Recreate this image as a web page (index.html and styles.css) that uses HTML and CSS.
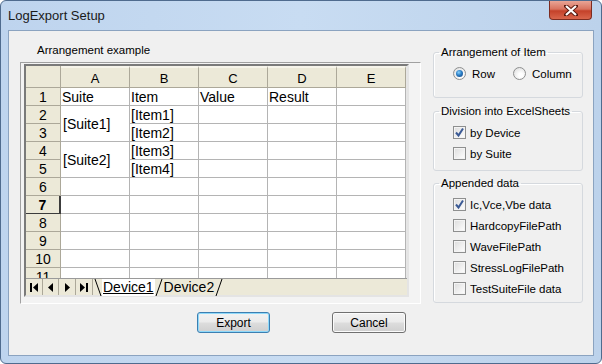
FILE: index.html
```html
<!DOCTYPE html>
<html lang="en">
<head>
    <meta charset="UTF-8">
    <title>LogExport Setup</title>
    <link rel="stylesheet" href="styles.css">
</head>
<body>
    <div class="window">
        <div class="titlebar">
            <span class="title">LogExport Setup</span>
            <div class="close-btn">
                <svg width="14" height="11" viewBox="0 0 14 11">
                    <path d="M2 1 L12 10 M12 1 L2 10" stroke="#5a1a10" stroke-width="4" stroke-linecap="square"/>
                    <path d="M2 1 L12 10 M12 1 L2 10" stroke="#ffffff" stroke-width="2.2"/>
                </svg>
            </div>
        </div>

        <div class="client">
            <div class="main">
                <div class="example">
                    <div class="caption">Arrangement example</div>
                    <div class="sheet-frame">
                        <div class="sheet">
                            <div class="grid">
                                <div class="hd corner"></div>
                                <div class="hd col">A</div>
                                <div class="hd col">B</div>
                                <div class="hd col">C</div>
                                <div class="hd col">D</div>
                                <div class="hd col">E</div>

                                <div class="hd row">1</div>
                                <div class="cell">Suite</div>
                                <div class="cell">Item</div>
                                <div class="cell">Value</div>
                                <div class="cell">Result</div>
                                <div class="cell"></div>

                                <div class="hd row">2</div>
                                <div class="cell merged">[Suite1]</div>
                                <div class="cell">[Item1]</div>
                                <div class="cell"></div>
                                <div class="cell"></div>
                                <div class="cell"></div>

                                <div class="hd row">3</div>
                                <div class="cell">[Item2]</div>
                                <div class="cell"></div>
                                <div class="cell"></div>
                                <div class="cell"></div>

                                <div class="hd row">4</div>
                                <div class="cell merged">[Suite2]</div>
                                <div class="cell">[Item3]</div>
                                <div class="cell"></div>
                                <div class="cell"></div>
                                <div class="cell"></div>

                                <div class="hd row">5</div>
                                <div class="cell">[Item4]</div>
                                <div class="cell"></div>
                                <div class="cell"></div>
                                <div class="cell"></div>

                                <div class="hd row">6</div>
                                <div class="cell"></div><div class="cell"></div><div class="cell"></div><div class="cell"></div><div class="cell"></div>
                                <div class="hd row active">7</div>
                                <div class="cell"></div><div class="cell"></div><div class="cell"></div><div class="cell"></div><div class="cell"></div>
                                <div class="hd row">8</div>
                                <div class="cell"></div><div class="cell"></div><div class="cell"></div><div class="cell"></div><div class="cell"></div>
                                <div class="hd row">9</div>
                                <div class="cell"></div><div class="cell"></div><div class="cell"></div><div class="cell"></div><div class="cell"></div>
                                <div class="hd row">10</div>
                                <div class="cell"></div><div class="cell"></div><div class="cell"></div><div class="cell"></div><div class="cell"></div>
                                <div class="hd row">11</div>
                                <div class="cell"></div><div class="cell"></div><div class="cell"></div><div class="cell"></div><div class="cell"></div>
                            </div>

                            <div class="tabbar">
                                <div class="nav">
                                    <svg width="16" height="17" viewBox="0 0 16 17"><rect x="4" y="4" width="2" height="9"/><path d="M12 4 L7 8.5 L12 13 Z"/></svg>
                                </div>
                                <div class="nav">
                                    <svg width="15" height="17" viewBox="0 0 15 17"><path d="M10 4 L5 8.5 L10 13 Z"/></svg>
                                </div>
                                <div class="nav">
                                    <svg width="16" height="17" viewBox="0 0 16 17"><path d="M6 4 L11 8.5 L6 13 Z"/></svg>
                                </div>
                                <div class="nav">
                                    <svg width="16" height="17" viewBox="0 0 16 17"><path d="M4 4 L9 8.5 L4 13 Z"/><rect x="10" y="4" width="2" height="9"/></svg>
                                </div>
                                <div class="tabs">
                                    <svg class="slant" width="8" height="17" viewBox="0 0 8 17"><path d="M1 0 L7 17" stroke="#000" fill="none"/></svg>
                                    <span class="tab current">Device1</span>
                                    <svg class="slant" width="8" height="17" viewBox="0 0 8 17"><path d="M7 0 L1 17" stroke="#000" fill="none"/></svg>
                                    <span class="tab">Device2</span>
                                    <svg class="slant" width="8" height="17" viewBox="0 0 8 17"><path d="M7 0 L1 17" stroke="#000" fill="none"/></svg>
                                </div>
                            </div>
                        </div>
                    </div>
                </div>

                <div class="options">
                    <fieldset class="group group-arrange">
                        <legend>Arrangement of Item</legend>
                        <div class="group-body radios">
                            <label class="opt first"><span class="radio on"></span>Row</label>
                            <label class="opt"><span class="radio"></span>Column</label>
                        </div>
                    </fieldset>

                    <fieldset class="group group-division">
                        <legend>Division into ExcelSheets</legend>
                        <div class="group-body">
                            <label class="opt"><span class="check on"><svg width="11" height="11" viewBox="0 0 11 11"><path d="M2 5.5 L4.5 8.5 L9 1.5" stroke="#3b5a95" stroke-width="2" fill="none"/></svg></span>by Device</label>
                            <label class="opt"><span class="check"></span>by Suite</label>
                        </div>
                    </fieldset>

                    <fieldset class="group group-append">
                        <legend>Appended data</legend>
                        <div class="group-body">
                            <label class="opt"><span class="check on"><svg width="11" height="11" viewBox="0 0 11 11"><path d="M2 5.5 L4.5 8.5 L9 1.5" stroke="#3b5a95" stroke-width="2" fill="none"/></svg></span>Ic,Vce,Vbe data</label>
                            <label class="opt"><span class="check"></span>HardcopyFilePath</label>
                            <label class="opt"><span class="check"></span>WaveFilePath</label>
                            <label class="opt"><span class="check"></span>StressLogFilePath</label>
                            <label class="opt"><span class="check"></span>TestSuiteFile data</label>
                        </div>
                    </fieldset>
                </div>
            </div>

            <div class="buttons">
                <button class="btn default">Export</button>
                <button class="btn">Cancel</button>
            </div>
        </div>
    </div>
</body>
</html>
```

FILE: styles.css
```css
* {
    margin: 0;
    padding: 0;
    box-sizing: border-box;
}

body {
    width: 602px;
    height: 364px;
    font-family: 'Liberation Sans', Arial, sans-serif;
    font-size: 12px;
    color: #000;
    background: #ffffff;
}

.window {
    width: 602px;
    height: 364px;
    border: 1px solid #4f6b8e;
    border-radius: 6px;
    background: linear-gradient(to right, #bed4ee, #c8dcf2 50%, #bcd2eb);
    display: flex;
    flex-direction: column;
}

.titlebar {
    height: 29px;
    display: flex;
    align-items: flex-start;
    justify-content: space-between;
    padding-left: 7px;
}

.title {
    font-size: 13px;
    line-height: 29px;
    color: #1a1a1a;
}

.close-btn {
    width: 43px;
    height: 19px;
    margin-right: 9px;
    border: 1px solid #7d2c20;
    border-top: none;
    border-radius: 0 0 4px 4px;
    background: linear-gradient(#e9a596 0%, #d8735f 45%, #c4412a 55%, #d9664c 100%);
    display: flex;
    align-items: center;
    justify-content: center;
}

.client {
    flex: 1;
    margin: 0 7px 7px;
    background: #f0f0f0;
    border: 1px solid #8ba3c0;
    display: flex;
    flex-direction: column;
}

.main {
    display: flex;
}

/* left: sample sheet */
.example {
    width: 401px;
    margin-left: 11px;
    padding-top: 12px;
}

.caption {
    font-size: 11.5px;
    line-height: 14px;
    padding-left: 17px;
    margin-bottom: 5px;
}

.sheet-frame {
    height: 242px;
    border: 1px solid;
    border-color: #a0a0a0 #ffffff #ffffff #a0a0a0;
    padding: 1px 0 0 3px;
    background: #f3f3f3;
}

.sheet {
    width: 385px;
    height: 233px;
    border: 2px solid;
    border-color: #7a7a7a #e4e4e4 #e4e4e4 #7a7a7a;
    background: #e6e6e6;
}

.grid {
    width: 380px;
    height: 212px;
    overflow: hidden;
    display: grid;
    grid-template-columns: 35px repeat(5, 69px);
    grid-template-rows: 22px repeat(11, 18px);
    background: #fff;
    font-size: 14px;
}

.cell {
    border-right: 1px solid #b4b4b4;
    border-bottom: 1px solid #b4b4b4;
    padding-left: 1px;
    line-height: 18px;
    white-space: nowrap;
    overflow: hidden;
}

.cell.merged {
    grid-row: span 2;
    display: flex;
    align-items: center;
    padding-left: 2px;
}

.hd {
    background: #ece9d8;
    border-right: 1px solid #aca899;
    border-bottom: 1px solid #aca899;
    text-align: center;
}

.hd.col {
    font-size: 13px;
    line-height: 22px;
    border-top: 2px solid #f6f4ea;
}

.hd.row {
    line-height: 18px;
}

.hd.row.active {
    font-weight: bold;
    border-right: 2px solid #3c3c3c;
    border-bottom: 1px solid #3c3c3c;
}

.tabbar {
    width: 381px;
    height: 17px;
    background: #ece9d8;
    border-top: 1px solid #9a9a9a;
    display: flex;
    align-items: center;
}

.nav {
    height: 16px;
    border-right: 1px solid #aca899;
    display: flex;
    align-items: center;
}

.nav svg {
    fill: #000;
}

.tabs {
    display: flex;
    align-items: center;
    height: 17px;
    margin-left: 1px;
}

.slant {
    display: block;
}

.tab {
    font-size: 14px;
    line-height: 16px;
    padding: 0 1px;
    height: 17px;
}

.tab.current {
    background: #ffffff;
    text-decoration: underline;
}

/* right: options */
.options {
    width: 150px;
    margin-left: 12px;
    padding-top: 14px;
    display: flex;
    flex-direction: column;
    gap: 6px;
    font-size: 11.5px;
}

.group {
    border: 1px solid #d5d9de;
    border-radius: 3px;
    padding: 0;
    margin: 0;
    min-width: 0;
    box-shadow: inset 1px 1px 0 #ffffff;
}

.group legend {
    line-height: 14px;
    padding: 0 2px;
    margin-left: 5px;
    white-space: nowrap;
}

.group-body {
    padding: 4px 0 0 19px;
    display: flex;
    flex-direction: column;
}

.group-arrange {
    height: 53px;
}

.group-division {
    height: 67px;
}

.group-append {
    height: 127px;
    margin-top: -1px;
}

.group-body.radios {
    flex-direction: row;
}

.opt {
    display: flex;
    align-items: center;
    height: 21px;
    gap: 4px;
    white-space: nowrap;
}

.radios .opt {
    gap: 6px;
}

.opt.first {
    width: 60px;
}

.radio {
    width: 13px;
    height: 13px;
    border-radius: 50%;
    border: 1px solid #8e8f8f;
    background: radial-gradient(circle at 60% 65%, #ffffff 20%, #e2e2e2 80%);
    display: flex;
    align-items: center;
    justify-content: center;
}

.radio.on::after {
    content: '';
    width: 7px;
    height: 7px;
    border-radius: 50%;
    background: radial-gradient(circle at 40% 35%, #8ad3ff 0%, #2a7dc4 45%, #163f7a 100%);
}

.check {
    width: 13px;
    height: 13px;
    border: 1px solid #8e8f8f;
    background: linear-gradient(135deg, #dcdcdc, #ffffff);
    box-shadow: inset 0 0 0 1px #f4f4f4;
    display: flex;
    align-items: center;
    justify-content: center;
}

/* bottom buttons */
.buttons {
    display: flex;
    gap: 62px;
    padding: 8px 0 0 188px;
}

.btn {
    height: 21px;
    width: 74px;
    font-family: 'Liberation Sans', Arial, sans-serif;
    font-size: 12px;
    color: #000;
    border: 1px solid #707070;
    border-radius: 3px;
    background: linear-gradient(#f2f2f2 0%, #ebebeb 48%, #dddddd 52%, #cfcfcf 100%);
    box-shadow: inset 0 0 0 1px #fbfbfb;
}

.btn.default {
    width: 73px;
    border-color: #3c7fb1;
    box-shadow: inset 0 0 0 1px #8fd9fa;
}
```
